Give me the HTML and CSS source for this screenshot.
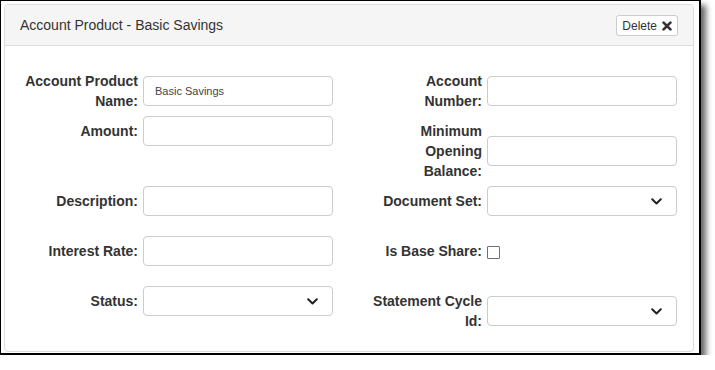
FILE: index.html
```html
<!DOCTYPE html>
<html lang="en">
<head>
    <meta charset="UTF-8">
    <title>Account Product - Basic Savings</title>
    <link rel="stylesheet" href="styles.css">
</head>
<body>
    <div class="frame">
        <div class="panel">
            <div class="panel-heading">
                <span class="panel-title">Account Product - Basic Savings</span>
                <button class="btn-delete" type="button">Delete
                    <svg class="icon-x" width="10" height="10" viewBox="0 0 10 10">
                        <path d="M1.6 1.6 L8.4 8.4 M8.4 1.6 L1.6 8.4" />
                    </svg>
                </button>
            </div>
            <div class="panel-body">
                <div class="form-grid">
                    <!-- row 1 -->
                    <div class="form-group">
                        <label class="control-label">Account Product Name:</label>
                        <input class="form-control" type="text" value="Basic Savings">
                    </div>
                    <div class="form-group">
                        <label class="control-label">Account Number:</label>
                        <input class="form-control" type="text">
                    </div>

                    <!-- row 2 -->
                    <div class="form-group">
                        <label class="control-label">Amount:</label>
                        <input class="form-control" type="text">
                    </div>
                    <div class="form-group">
                        <label class="control-label">Minimum Opening Balance:</label>
                        <input class="form-control" type="text">
                    </div>

                    <!-- row 3 -->
                    <div class="form-group">
                        <label class="control-label">Description:</label>
                        <input class="form-control" type="text">
                    </div>
                    <div class="form-group">
                        <label class="control-label">Document Set:</label>
                        <div class="select-wrap">
                            <select class="form-control"></select>
                            <svg class="chevron" width="11" height="7" viewBox="0 0 11 7">
                                <path d="M1.2 1.2 L5.5 5.5 L9.8 1.2" />
                            </svg>
                        </div>
                    </div>

                    <!-- row 4 -->
                    <div class="form-group">
                        <label class="control-label">Interest Rate:</label>
                        <input class="form-control" type="text">
                    </div>
                    <div class="form-group">
                        <label class="control-label">Is Base Share:</label>
                        <input class="checkbox" type="checkbox">
                    </div>

                    <!-- row 5 -->
                    <div class="form-group">
                        <label class="control-label">Status:</label>
                        <div class="select-wrap">
                            <select class="form-control"></select>
                            <svg class="chevron" width="11" height="7" viewBox="0 0 11 7">
                                <path d="M1.2 1.2 L5.5 5.5 L9.8 1.2" />
                            </svg>
                        </div>
                    </div>
                    <div class="form-group">
                        <label class="control-label">Statement Cycle Id:</label>
                        <div class="select-wrap">
                            <select class="form-control"></select>
                            <svg class="chevron" width="11" height="7" viewBox="0 0 11 7">
                                <path d="M1.2 1.2 L5.5 5.5 L9.8 1.2" />
                            </svg>
                        </div>
                    </div>
                </div>
            </div>
        </div>
    </div>
</body>
</html>
```

FILE: styles.css
```css
body {
    margin: 0;
    background: #fff;
    font-family: "Liberation Sans", Arial, sans-serif;
    color: #333;
}
.frame {
    box-sizing: border-box;
    width: 701px;
    height: 355px;
    border-style: solid;
    border-color: #000;
    border-width: 1px 2px 2px 1px;
    padding: 3px 5px 2px 3px;
    background: #fff;
    box-shadow: 5px 5px 6px rgba(0,0,0,0.6);
}
.panel {
    border: 1px solid #ddd;
    border-radius: 4px;
    background: #fff;
}
.panel-heading {
    display: flex;
    justify-content: space-between;
    align-items: center;
    height: 40px;
    padding: 0 15px;
    background: #f5f5f5;
    border-bottom: 1px solid #ddd;
    border-radius: 3px 3px 0 0;
}
.panel-title {
    font-size: 14px;
    line-height: 20px;
    color: #333;
}
.btn-delete {
    display: flex;
    align-items: center;
    gap: 5px;
    box-sizing: border-box;
    height: 21px;
    margin-top: 1px;
    padding: 0 5px;
    background: #fff;
    border: 1px solid #ccc;
    border-radius: 3px;
    font-family: "Liberation Sans", Arial, sans-serif;
    font-size: 12px;
    color: #333;
}
.icon-x path {
    stroke: #333;
    stroke-width: 2.7;
    stroke-linecap: round;
    fill: none;
}
.panel-body {
    padding: 25px 16px 20px 16px;
}
.form-grid {
    display: grid;
    grid-template-columns: 313px 314px;
    grid-template-rows: auto auto 45px 45px auto;
    column-gap: 31px;
    row-gap: 5px;
    align-items: baseline;
}
.form-group {
    display: flex;
    align-items: center;
    gap: 5px;
}
.control-label {
    flex: 0 0 117px;
    text-align: right;
    font-weight: bold;
    font-size: 14px;
    line-height: 20px;
    color: #333;
}
.form-control {
    box-sizing: border-box;
    width: 190px;
    height: 30px;
    margin: 0;
    padding: 0 11px;
    border: 1px solid #ccc;
    border-radius: 4px;
    background: #fff;
    font-family: "Liberation Sans", Arial, sans-serif;
    font-size: 11px;
    color: #444;
    outline: none;
}
select.form-control {
    appearance: none;
    -webkit-appearance: none;
}
.select-wrap {
    position: relative;
    width: 190px;
    height: 30px;
}
.chevron {
    position: absolute;
    right: 15px;
    top: 12px;
}
.chevron path {
    stroke: #222;
    stroke-width: 2;
    fill: none;
    stroke-linecap: round;
    stroke-linejoin: round;
}
.checkbox {
    appearance: none;
    -webkit-appearance: none;
    box-sizing: border-box;
    width: 13px;
    height: 13px;
    margin: 2px 0 0 0;
    border: 1px solid #707070;
    border-radius: 1px;
    background: #fff;
}
```
